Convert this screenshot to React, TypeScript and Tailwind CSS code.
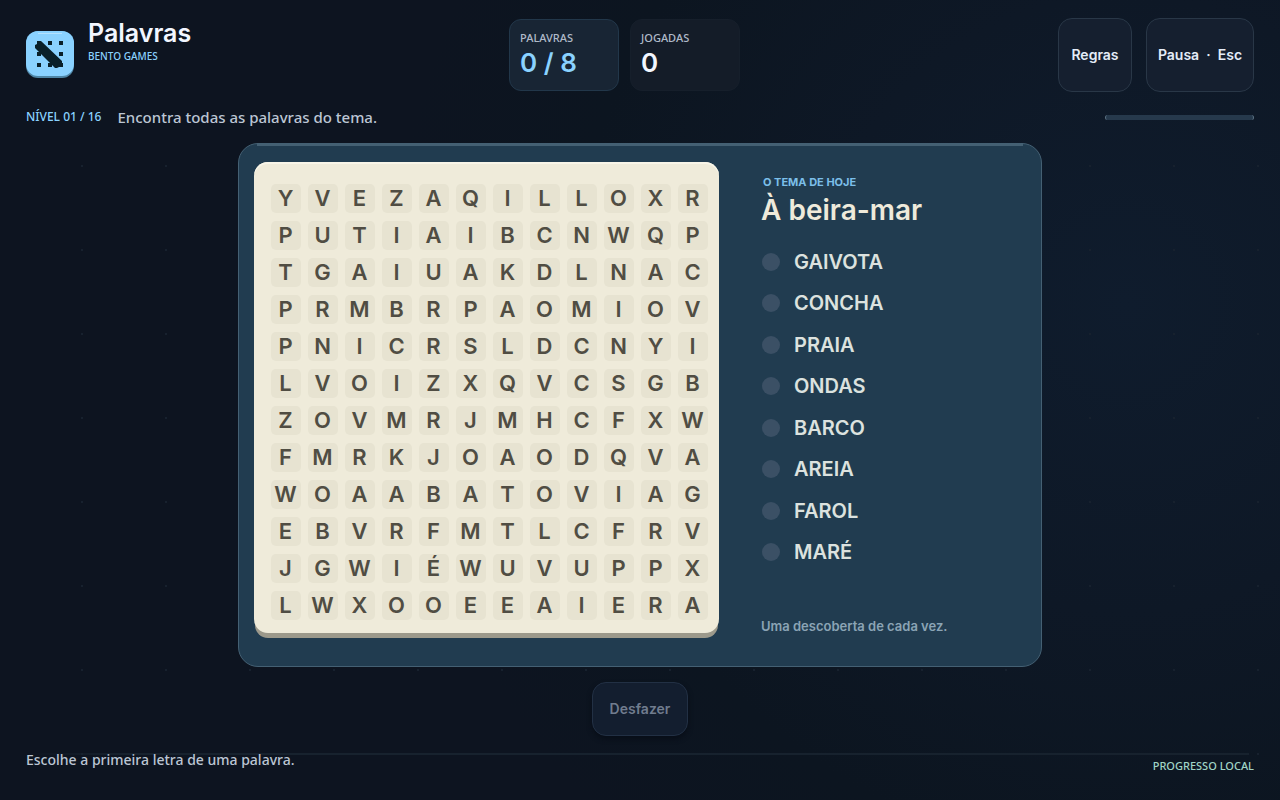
const ROWS = [
  'YVEZAQILLOXR',
  'PUTIAIBCNWQP',
  'TGAIUAKDLNAC',
  'PRMBRPAOMIOV',
  'PNICRSLDCNYI',
  'LVOIZXQVCSGB',
  'ZOVMRJMHCFXW',
  'FMRKJOAODQVA',
  'WOAABATOVIAG',
  'EBVRFMTLCFRV',
  'JGWIÉWUVUPPX',
  'LWXOOEEAIERA',
];

const WORDS = ['GAIVOTA', 'CONCHA', 'PRAIA', 'ONDAS', 'BARCO', 'AREIA', 'FAROL', 'MARÉ'];

function Logo() {
  return (
    <svg className="mt-[13px] size-12 shrink-0" viewBox="0 0 48 48" aria-hidden="true">
      <rect width="48" height="47" rx="12" fill="#4f86a6" />
      <rect width="48" height="45" rx="12" fill="#8ad2ff" />
      <rect x="12" y="2" width="24" height="1" fill="#b4e2ff" />
      <g fill="#0a2029">
        <path d="M11 10h4v4h-4zM22 10h4v4h-4zM33 10h4v4h-4zM11 21h4v4h-4zM33 21h4v4h-4zM11 32h4v4h-4zM22 32h4v4h-4zM33 32h4v4h-4z" />
        <path d="M9 14l2-1v-3h4l21 20v2h1v3l-4 1l-2 1h-2l-2-2l-18-18z" />
      </g>
    </svg>
  );
}

function Stat({ label, value, active = false }: { label: string; value: string; active?: boolean }) {
  return (
    <div
      className={
        active
          ? 'h-[72px] w-[110px] rounded-xl border border-[#22374a] bg-[#182534] px-[10px] pt-[10px] text-[#8ad2ff]'
          : 'h-[72px] w-[110px] rounded-xl border border-[#161f2b] bg-[#141c28] px-[10px] pt-[10px] text-[#f2f6ff]'
      }
    >
      <dt className="font-['Noto_Sans'] text-[11px] leading-4 font-medium text-[#b0bac9]">{label}</dt>
      <dd className="text-[26px] leading-[34px] font-semibold">{value}</dd>
    </div>
  );
}

export default function App() {
  return (
    <div className="relative flex min-h-screen flex-col bg-[#0d1420] bg-[radial-gradient(circle_at_88%_38%,#0f1c2d_0%,#0e1826_25%,#0c1520_45%,transparent_60%)] px-[26px] pt-[18px] font-['Inter',sans-serif] text-[#f2f6ff]">
      <div className="pointer-events-none absolute inset-x-0 top-[124px] bottom-0 bg-[radial-gradient(circle_at_center,#17212e_1px,transparent_1px)] bg-[size:84px_84px] bg-[position:40px_0px]" />

      <header className="relative flex items-start justify-between">
        <div className="flex items-start gap-[14px]">
          <Logo />
          <div>
            <h1 className="text-[25px] leading-[30px] font-semibold">Palavras</h1>
            <p className="font-['Noto_Sans'] text-[10px] leading-4 font-medium text-[#8ad2ff]">BENTO GAMES</p>
          </div>
        </div>
        <dl className="mt-px flex gap-[11px]">
          <Stat label="PALAVRAS" value="0 / 8" active />
          <Stat label="JOGADAS" value="0" />
        </dl>
        <div className="flex gap-[14px] text-sm font-semibold text-[#e4ecf8]">
          <button className="h-[74px] w-[74px] rounded-[14px] border border-[#293747] bg-[#151f2f]">Regras</button>
          <button className="h-[74px] w-[108px] rounded-[14px] border border-[#293747] bg-[#151f2f]">Pausa&nbsp; ·&nbsp; Esc</button>
        </div>
      </header>

      <div className="relative mt-[14px] flex h-[22px] items-center font-['Noto_Sans'] font-medium">
        <span className="text-xs text-[#8ad2ff]">NÍVEL 01 / 16</span>
        <p className="ml-4 text-[15px] text-[#bcc6d4]">Encontra todas as palavras do tema.</p>
        <div
          role="progressbar"
          aria-label="Progresso"
          aria-valuenow={0}
          aria-valuemin={0}
          aria-valuemax={8}
          className="ml-auto h-[5px] w-[149px] rounded-full border-x border-[#5b7182] bg-[#26394c]"
        />
      </div>

      <main className="relative mx-auto mt-[15px] flex w-full max-w-[804px] rounded-[20px] border border-[#446073] bg-[#213c50] px-[15px] pt-[18px] pb-[33px]">
        <div className="absolute -top-px right-[18px] left-[18px] h-[3px] bg-[#446073]" />
        <div className="grid shrink-0 grid-cols-[repeat(12,30px)] gap-x-[7px] gap-y-2 rounded-[14px] bg-[#efebda] pt-[22px] pr-[11px] pb-[13px] pl-[17px] shadow-[inset_0_2px_0_#f8f5e8,0_6px_0_-1px_#9c998b]">
          {ROWS.flatMap((row, r) =>
            [...row].map((letter, c) => (
              <button
                key={`${r}-${c}`}
                className="flex h-[29px] w-[30px] items-center justify-center rounded-[5px] bg-[#e7e3d1] pr-px pb-px text-[22px] leading-none font-semibold text-[#504d43]"
              >
                {letter}
              </button>
            )),
          )}
        </div>

        <section className="ml-[42px] flex flex-col">
          <p className="mt-3 ml-[2px] text-[11px] leading-4 font-bold text-[#7cbfe9]">O TEMA DE HOJE</p>
          <h2 className="text-[28px] leading-10 font-semibold text-[#eeeadb]">À beira-mar</h2>
          <ul className="mt-[18px] ml-px flex h-[318px] flex-col justify-between">
            {WORDS.map((word) => (
              <li key={word} className="flex items-center gap-[14px] text-[20px] leading-7 font-semibold text-[#dce2df]">
                <span className="size-[18px] rounded-full bg-[#3b5065]" />
                {word}
              </li>
            ))}
          </ul>
          <p className="mt-[50px] -mb-1 text-[13px] leading-5 font-semibold text-[#8ba4b5]">Uma descoberta de cada vez.</p>
        </section>
      </main>

      <button
        disabled
        className="relative mt-[15px] h-[54px] w-24 self-center rounded-[14px] border border-[#223044] bg-[#131e2f] text-sm font-semibold text-[#707c8e] shadow-[0_3px_5px_#080e18]"
      >
        Desfazer
      </button>

      <footer className="relative mt-[17px] flex justify-between font-['Noto_Sans'] font-medium">
        <div className="absolute top-0 right-[5px] left-0 h-[2px] bg-[linear-gradient(90deg,transparent,#17222e_100px)]" />
        <p className="relative -mt-[3px] text-sm leading-5 text-[#bcc6d4]">Escolhe a primeira letra de uma palavra.</p>
        <p className="relative mt-[5px] text-[11px] leading-4 text-[#a0d4c6]">PROGRESSO LOCAL</p>
      </footer>
    </div>
  );
}
